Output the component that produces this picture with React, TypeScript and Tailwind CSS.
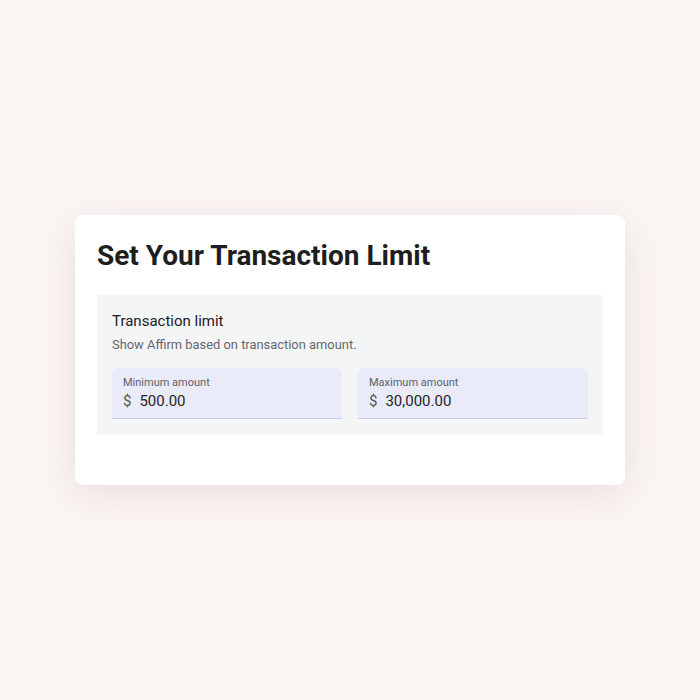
import React from "react";

function AmountField({ label, value }: { label: string; value: string }) {
  return (
    <div className="flex-1 h-[51px] rounded-t-[6px] bg-[#e9ebf8] border-b border-[#c9cdee] pl-[11px] pt-[8px]">
      <div className="text-[11px] leading-[14px] text-[#5f6068]">{label}</div>
      <div className="flex items-center mt-[2px] text-[15px] leading-[18px] text-[#1f1f22]">
        <span className="text-[#55565c] mr-[8px]">$</span>
        <span>{value}</span>
      </div>
    </div>
  );
}

export default function App() {
  return (
    <div
      className="w-[700px] h-[700px] bg-[#fbf5f4] flex items-center justify-center"
      style={{ fontFamily: "Roboto, 'Noto Sans', sans-serif" }}
    >
      <div className="w-[550px] h-[270px] bg-white rounded-[8px] shadow-[0_10px_40px_rgba(120,100,100,0.14)] px-[22px] pt-[24px]">
        <h1 className="text-[28px] leading-[33px] font-bold text-[#1e1e1e]">
          Set Your Transaction Limit
        </h1>
        <div className="mt-[23px] bg-[#f4f5f7] px-[15px] pt-[16px] pb-[16px]">
          <div className="text-[15px] leading-[20px] text-[#202124]">Transaction limit</div>
          <div className="text-[12.9px] leading-[18px] text-[#66676c] mt-[5px]">
            Show Affirm based on transaction amount.
          </div>
          <div className="flex gap-[16px] mt-[14px]">
            <AmountField label="Minimum amount" value="500.00" />
            <AmountField label="Maximum amount" value="30,000.00" />
          </div>
        </div>
      </div>
    </div>
  );
}
